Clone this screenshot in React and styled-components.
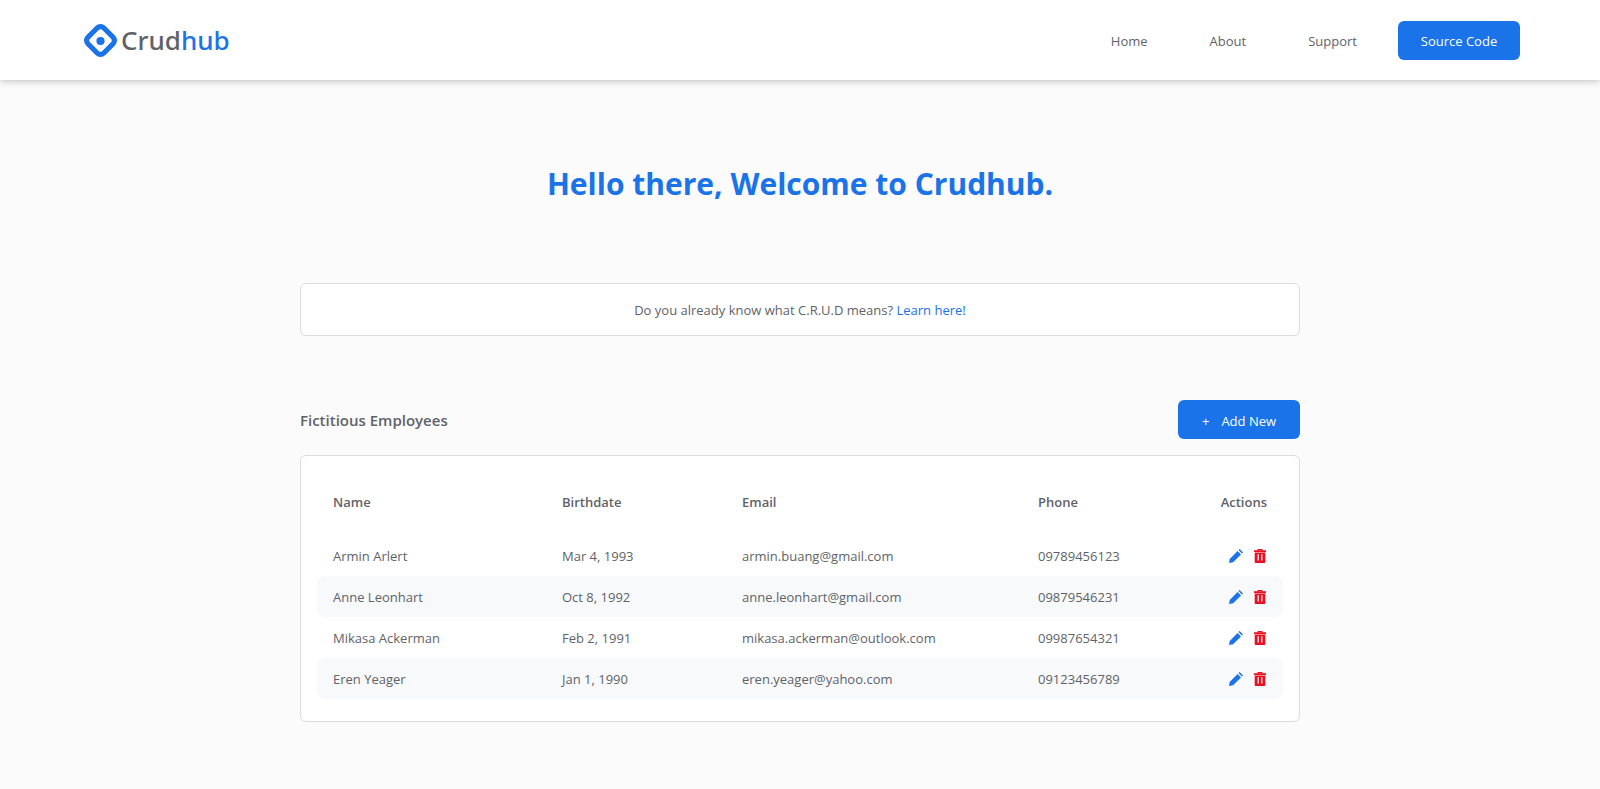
import React from "react";
import styled, { createGlobalStyle, css } from "styled-components";

const GlobalStyle = createGlobalStyle`
  *, *::before, *::after { box-sizing: border-box; }
  body {
    margin: 0;
    background: #fbfbfb;
    color: #5f6368;
    font-family: "Segoe UI", "Open Sans", "Noto Sans", sans-serif;
    font-size: 13px;
    line-height: 20px;
  }
`;

const Header = styled.header`
  display: flex;
  align-items: center;
  justify-content: space-between;
  height: 80px;
  padding: 0 5%;
  background: #fff;
  box-shadow: 0 0 8px rgba(0, 0, 0, 0.3);
`;

const Brand = styled.a`
  display: flex;
  align-items: center;
  gap: 4px;
  padding-left: 4px;
  color: #5f6368;
  font-family: "Noto Sans", "Open Sans", sans-serif;
  font-size: 26px;
  font-weight: 500;
  line-height: 32px;
  text-decoration: none;
`;

const BrandAccent = styled.span`
  color: #1a73e8;
`;

const Nav = styled.nav`
  display: flex;
  align-items: center;
  gap: 41px;
`;

const NavLinks = styled.div`
  display: flex;
  gap: 62px;
  padding-top: 2px;
`;

const NavLink = styled.a`
  color: #5f6368;
  text-decoration: none;
`;

const filled = css`
  display: inline-flex;
  align-items: center;
  justify-content: center;
  gap: 12px;
  width: 122px;
  height: 39px;
  padding: 2px 0 0;
  border: 0;
  border-radius: 6px;
  background: #1a73e8;
  color: #fff;
  font: inherit;
  white-space: nowrap;
  text-decoration: none;
  cursor: pointer;
`;

const Button = styled.button`
  ${filled}
`;

const ButtonLink = styled.a`
  ${filled}
`;

const Main = styled.main`
  max-width: 1000px;
  margin: 0 auto;
  padding: 80px 0 64px;
`;

const Title = styled.h1`
  margin: 0 0 75px;
  color: #1a73e8;
  font-size: 30px;
  font-weight: 700;
  line-height: 48px;
  text-align: center;
`;

const Panel = styled.section`
  border: 1px solid #dadce0;
  border-radius: 6px;
  background: #fff;
`;

const Notice = styled(Panel)`
  padding: 16px 16px 15px;
  text-align: center;
`;

const InlineLink = styled.a`
  color: #1a73e8;
  text-decoration: none;
`;

const SectionBar = styled.div`
  display: flex;
  align-items: center;
  justify-content: space-between;
  margin: 64px 0 16px;
`;

const SectionTitle = styled.h2`
  margin: 0;
  font-size: 15px;
  font-weight: 600;
  line-height: 24px;
`;

const TablePanel = styled(Panel)`
  padding: 16px 16px 22px;
`;

const Table = styled.table`
  width: 100%;
  border-collapse: separate;
  border-spacing: 0;
  table-layout: fixed;
`;

const Col = styled.col`
  width: ${(p) => p.$width};
`;

const Row = styled.tr`
  &:nth-child(even) > td {
    background: #f8f9fb;
  }
`;

const HeadCell = styled.th`
  height: 63px;
  padding: 0 16px 4px;
  font-weight: 600;
  text-align: ${(p) => p.$align || "left"};
`;

const Cell = styled.td`
  height: 41px;
  padding: 0 16px;
  &:first-child { border-radius: 8px 0 0 8px; }
  &:last-child { border-radius: 0 8px 8px 0; }
`;

const Actions = styled.div`
  display: flex;
  align-items: center;
  justify-content: flex-end;
  gap: 11px;
  padding-right: 1px;
`;

const IconButton = styled.button`
  display: flex;
  padding: 0;
  border: 0;
  background: none;
  color: ${(p) => p.$color};
  cursor: pointer;
`;

const LogoMark = () => (
  <svg width="33" height="33" viewBox="0 0 33 33" aria-hidden="true">
    <path
      fill="#1a73e8"
      fillRule="evenodd"
      d="M11.55 2.05a7 7 0 0 1 9.9 0l9.5 9.5a7 7 0 0 1 0 9.9l-9.5 9.5a7 7 0 0 1-9.9 0l-9.5-9.5a7 7 0 0 1 0-9.9zM14.73 6.03l-8.7 8.7a2.5 2.5 0 0 0 0 3.54l8.7 8.7a2.5 2.5 0 0 0 3.54 0l8.7-8.7a2.5 2.5 0 0 0 0-3.54l-8.7-8.7a2.5 2.5 0 0 0-3.54 0z"
    />
    <circle cx="16.5" cy="17" r="4.1" fill="#1a73e8" />
  </svg>
);

const PencilIcon = () => (
  <svg width="14" height="14" viewBox="0 0 14 14" fill="currentColor" aria-hidden="true">
    <path d="M0 14 .7 9.9 8.6 2 12 5.4 4.1 13.3z" />
    <path d="M9.5 1.1 10.6 0 14 3.4 12.9 4.5z" />
  </svg>
);

const TrashIcon = () => (
  <svg width="12" height="14" viewBox="0 0 12 14" fill="currentColor" aria-hidden="true">
    <path fillRule="evenodd" d="M3.4 1.2V.8a.8.8 0 0 1 .8-.8h3.6a.8.8 0 0 1 .8.8v.4H12V3H0V1.2zM4.6 1.2h2.8V1H4.6z" />
    <path fillRule="evenodd" d="M.7 3.6h10.6V13a1 1 0 0 1-1 1H1.7a1 1 0 0 1-1-1zM3.6 5.2v6.4h1.2V5.2zM7.2 5.2v6.4h1.2V5.2z" />
  </svg>
);

const employees = [
  { name: "Armin Arlert", birthdate: "Mar 4, 1993", email: "armin.buang@gmail.com", phone: "09789456123" },
  { name: "Anne Leonhart", birthdate: "Oct 8, 1992", email: "anne.leonhart@gmail.com", phone: "09879546231" },
  { name: "Mikasa Ackerman", birthdate: "Feb 2, 1991", email: "mikasa.ackerman@outlook.com", phone: "09987654321" },
  { name: "Eren Yeager", birthdate: "Jan 1, 1990", email: "eren.yeager@yahoo.com", phone: "09123456789" },
];

export default function App() {
  return (
    <>
      <GlobalStyle />
      <Header>
        <Brand href="#">
          <LogoMark />
          <span>Crud<BrandAccent>hub</BrandAccent></span>
        </Brand>
        <Nav>
          <NavLinks>
            <NavLink href="#home">Home</NavLink>
            <NavLink href="#about">About</NavLink>
            <NavLink href="#support">Support</NavLink>
          </NavLinks>
          <ButtonLink href="#source">Source Code</ButtonLink>
        </Nav>
      </Header>
      <Main>
        <Title>Hello there, Welcome to Crudhub.</Title>
        <Notice>
          Do you already know what C.R.U.D means? <InlineLink href="#learn">Learn here!</InlineLink>
        </Notice>
        <SectionBar>
          <SectionTitle>Fictitious Employees</SectionTitle>
          <Button type="button"><span>+</span><span>Add New</span></Button>
        </SectionBar>
        <TablePanel>
          <Table>
            <colgroup>
              <Col $width="229px" />
              <Col $width="180px" />
              <Col $width="296px" />
              <Col $width="130px" />
              <Col />
            </colgroup>
            <thead>
              <tr>
                <HeadCell scope="col">Name</HeadCell>
                <HeadCell scope="col">Birthdate</HeadCell>
                <HeadCell scope="col">Email</HeadCell>
                <HeadCell scope="col">Phone</HeadCell>
                <HeadCell scope="col" $align="right">Actions</HeadCell>
              </tr>
            </thead>
            <tbody>
              {employees.map((e) => (
                <Row key={e.email}>
                  <Cell>{e.name}</Cell>
                  <Cell>{e.birthdate}</Cell>
                  <Cell>{e.email}</Cell>
                  <Cell>{e.phone}</Cell>
                  <Cell>
                    <Actions>
                      <IconButton type="button" $color="#1a73e8" aria-label={`Edit ${e.name}`}><PencilIcon /></IconButton>
                      <IconButton type="button" $color="#e81123" aria-label={`Delete ${e.name}`}><TrashIcon /></IconButton>
                    </Actions>
                  </Cell>
                </Row>
              ))}
            </tbody>
          </Table>
        </TablePanel>
      </Main>
    </>
  );
}
